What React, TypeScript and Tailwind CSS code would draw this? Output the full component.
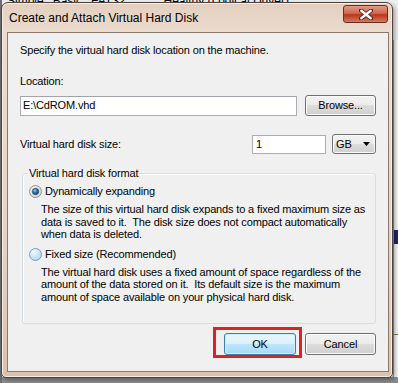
import React from "react";

const ui = { fontFamily: '"Liberation Sans", Arial, sans-serif' };

function Radio({ checked }: { checked?: boolean }) {
  return (
    <svg width="13" height="13" viewBox="0 0 13 13" className="shrink-0">
      <defs>
        <radialGradient id={checked ? "rc" : "ru"} cx="0.35" cy="0.3" r="0.8">
          <stop offset="0" stopColor={checked ? "#f4f4f4" : "#f2f9fe"} />
          <stop offset="1" stopColor={checked ? "#d4d4d4" : "#a9d4f2"} />
        </radialGradient>
        <radialGradient id="dot" cx="0.4" cy="0.35" r="0.7">
          <stop offset="0" stopColor="#8fd3f3" />
          <stop offset="0.5" stopColor="#2a6fa6" />
          <stop offset="1" stopColor="#1a3d5e" />
        </radialGradient>
      </defs>
      <circle cx="6.5" cy="6.5" r="6" fill={`url(#${checked ? "rc" : "ru"})`} stroke={checked ? "#8e8f8f" : "#7a9ab8"} strokeWidth="1" />
      {checked && <circle cx="6.5" cy="6.5" r="3.2" fill="url(#dot)" stroke="#1b3f60" strokeWidth="0.6" />}
    </svg>
  );
}

function Btn({ children, className = "" }: { children: React.ReactNode; className?: string }) {
  return (
    <button
      className={`flex items-center justify-center rounded-[3px] border border-[#707070] bg-[linear-gradient(#f2f2f2_0%,#ebebeb_50%,#dddddd_50%,#cfcfcf_100%)] text-[11px] text-black shadow-[inset_0_0_0_1px_#fcfcfc] ${className}`}
    >
      {children}
    </button>
  );
}

export default function App() {
  return (
    <div className="relative w-[398px] h-[383px] overflow-hidden bg-[#eeeeee]" style={ui}>
      {/* desktop behind the dialog */}
      <div className="absolute left-0 top-[-8px] flex text-[12px] text-black whitespace-nowrap">
        <span className="ml-[7px]">Simple</span>
        <span className="ml-[9px]">Basic</span>
        <span className="ml-[9px]">FAT32</span>
        <span className="ml-[38px]">Healthy (Logical Driver)</span>
      </div>
      <div className="absolute right-0 top-[40px] w-[5px] h-[343px] bg-[#f4f4f4] border-l border-[#9a9a9a]">
        <div className="mt-[190px] h-[14px] bg-[#1c2470]" />
        <div className="mt-[90px] h-[1px] bg-[#5a8a4a]" />
      </div>
      <div className="absolute left-0 bottom-0 w-full h-[6px] bg-[#8c8c8c]" />
      <div className="absolute left-0 top-0 w-[2px] h-full bg-[#6e6e6e]" />

      {/* dialog window */}
      <div className="absolute left-[1px] top-[2px] w-[392px] h-[376px] flex flex-col rounded-t-[7px] rounded-b-[5px] border border-[#4f4540] bg-[linear-gradient(180deg,#e3cfbf_0%,#ecdccf_8%,#e7d3c3_60%,#dcc1ac_100%)] shadow-[inset_0_0_0_1px_#f6ece4,2px_2px_4px_rgba(0,0,0,0.35)]">
        <div className="h-[29px] flex items-start pl-[7px] pr-[4px]">
          <span className="self-center text-[12px] text-black">Create and Attach Virtual Hard Disk</span>
          <div className="ml-auto mt-[2px] w-[45px] h-[18px] rounded-[3px] border border-[#6b2c20] bg-[linear-gradient(#e09a88_0%,#cf6a52_45%,#b9361c_55%,#d47a60_100%)] flex items-center justify-center">
            <svg width="14" height="11" viewBox="0 0 14 11">
              <path d="M2 1.5 L12 9.5 M12 1.5 L2 9.5" stroke="#4a1c14" strokeWidth="4" strokeLinecap="round" />
              <path d="M2.3 1.8 L11.7 9.2 M11.7 1.8 L2.3 9.2" stroke="#ffffff" strokeWidth="2.4" strokeLinecap="round" />
            </svg>
          </div>
        </div>

        <div className="flex-1 ml-[5px] mr-[3px] mb-[5px] border border-[#8a7a6e] bg-[#f0f0f0] flex flex-col px-[12px] pt-[10px] text-[11px] tracking-[-0.15px] whitespace-nowrap text-black">
          <p className="leading-[15px]">Specify the virtual hard disk location on the machine.</p>
          <p className="mt-[16px] leading-[15px]">Location:</p>
          <div className="mt-[6px] flex items-center h-[21px]">
            <div className="w-[277px] h-[20px] border border-[#abadb3] border-t-[#a0a3aa] bg-white flex items-center pl-[2px]">E:\CdROM.vhd</div>
            <Btn className="ml-auto w-[71px] h-[21px]">Browse...</Btn>
          </div>
          <div className="mt-[18px] flex items-center h-[20px]">
            <span>Virtual hard disk size:</span>
            <div className="ml-auto w-[74px] h-[19px] border border-[#abadb3] bg-white flex items-center pl-[3px]">1</div>
            <Btn className="ml-[6px] w-[44px] h-[20px] !justify-start pl-[3px]">
              <span>GB</span>
              <svg width="7" height="4" viewBox="0 0 7 4" className="ml-auto mr-[5px]">
                <path d="M0 0 H7 L3.5 4 Z" fill="#000" />
              </svg>
            </Btn>
          </div>

          <fieldset className="mt-[13px] ml-[2px] rounded-[3px] border border-[#d5dfe5] shadow-[inset_1px_1px_0_#ffffff] pl-[6px] pb-[20px]">
            <legend className="leading-[13px] px-[1px] -ml-[1px]">Virtual hard disk format</legend>
            <div className="mt-[4px] flex items-center h-[15px] gap-[3px]">
              <Radio checked />
              <span>Dynamically expanding</span>
            </div>
            <p className="mt-[4px] ml-[12px] leading-[12.5px]">
              The size of this virtual hard disk expands to a fixed maximum size as
              <br />
              data is saved to it.&nbsp; The disk size does not compact automatically
              <br />
              when data is deleted.
            </p>
            <div className="mt-[6px] flex items-center h-[15px] gap-[3px]">
              <Radio />
              <span>Fixed size (Recommended)</span>
            </div>
            <p className="mt-[4px] ml-[12px] leading-[12.5px]">
              The virtual hard disk uses a fixed amount of space regardless of the
              <br />
              amount of the data stored on it.&nbsp; Its default size is the maximum
              <br />
              amount of space available on your physical hard disk.
            </p>
          </fieldset>

          <div className="mt-[9px] flex justify-end gap-[9px]">
            <div className="relative">
              <button className="w-[72px] h-[22px] rounded-[3px] border border-[#3c7fb1] bg-[linear-gradient(#eaf6fd_0%,#d9f0fc_50%,#bee6fd_50%,#a7d9f5_100%)] shadow-[inset_0_0_0_1px_#c9f0ff] text-[11px] text-black">
                OK
              </button>
              <div className="absolute -left-[11px] -right-[6px] -top-[6px] -bottom-[3px] border-[3px] border-[#d9232b] pointer-events-none" />
            </div>
            <Btn className="w-[71px] h-[22px]">Cancel</Btn>
          </div>
        </div>
      </div>
    </div>
  );
}
